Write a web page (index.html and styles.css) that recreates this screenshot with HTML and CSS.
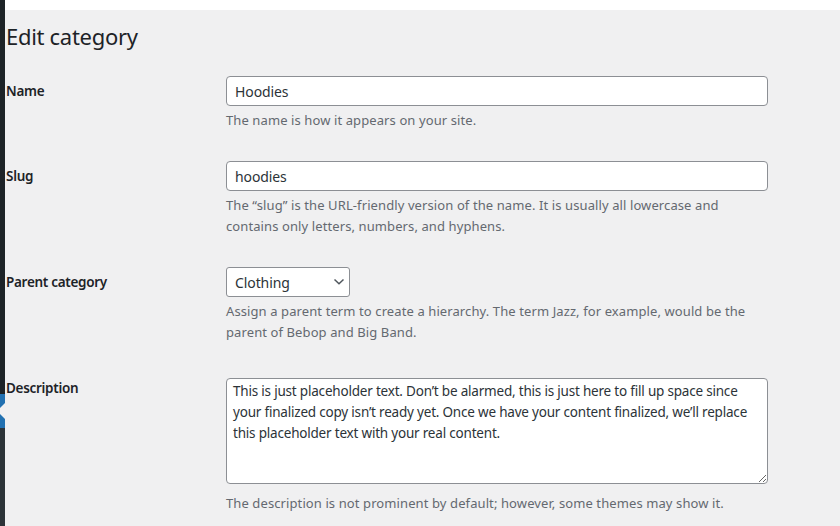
FILE: index.html
```html
<!DOCTYPE html>
<html lang="en">
<head>
<meta charset="utf-8">
<title>Edit category</title>
<link rel="stylesheet" href="styles.css">
</head>
<body>
<div class="layout">
  <aside class="sidebar">
    <div class="menu-top"></div>
    <div class="menu-current"><span class="menu-arrow"></span></div>
    <div class="menu-sub"></div>
  </aside>
  <main class="main">
    <div class="topbar"></div>
    <div class="wrap">
      <h1 class="page-title">Edit category</h1>
      <form class="form-table">
        <div class="form-row">
          <label class="form-label" for="name">Name</label>
          <div class="form-field">
            <input class="text-input" id="name" type="text" value="Hoodies">
            <p class="description">The name is how it appears on your site.</p>
          </div>
        </div>
        <div class="form-row">
          <label class="form-label" for="slug">Slug</label>
          <div class="form-field">
            <input class="text-input" id="slug" type="text" value="hoodies">
            <p class="description">The “slug” is the URL-friendly version of the name. It is usually all lowercase and contains only letters, numbers, and hyphens.</p>
          </div>
        </div>
        <div class="form-row">
          <label class="form-label" for="parent">Parent category</label>
          <div class="form-field">
            <span class="select-wrap">
              <select class="select-input" id="parent">
                <option>Clothing</option>
              </select>
              <svg class="select-chevron" width="12" height="8" viewBox="0 0 12 8" aria-hidden="true"><path d="M1.5 1.5 L6 5.8 L10.5 1.5" fill="none" stroke="#50575e" stroke-width="1.5"/></svg>
            </span>
            <p class="description">Assign a parent term to create a hierarchy. The term Jazz, for example, would be the parent of Bebop and Big Band.</p>
          </div>
        </div>
        <div class="form-row">
          <label class="form-label" for="desc">Description</label>
          <div class="form-field">
            <textarea class="textarea-input" id="desc" rows="5">This is just placeholder text. Don’t be alarmed, this is just here to fill up space since
your finalized copy isn’t ready yet. Once we have your content finalized, we’ll replace
this placeholder text with your real content.</textarea>
            <p class="description desc-after-textarea">The description is not prominent by default; however, some themes may show it.</p>
          </div>
        </div>
      </form>
    </div>
  </main>
</div>
</body>
</html>
```
FILE: styles.css
```css
* { box-sizing: border-box; }

html, body {
  margin: 0;
  padding: 0;
  height: 100%;
  overflow: hidden;
}

body {
  background: #f0f0f1;
  color: #3c434a;
  font-family: "Noto Sans", "Open Sans", sans-serif;
  font-size: 13px;
}

.layout {
  display: flex;
  min-height: 526px;
}

.sidebar {
  width: 5px;
  flex: 0 0 5px;
  display: flex;
  flex-direction: column;
  background: #1d2327;
}

.menu-top {
  height: 394px;
  background: #1d2327;
}

.menu-current {
  height: 34px;
  background: #2271b1;
  position: relative;
  overflow: hidden;
}

.menu-arrow {
  position: absolute;
  right: 0;
  top: 50%;
  margin-top: -8px;
  width: 0;
  height: 0;
  border: 8px solid transparent;
  border-right-color: #f0f0f1;
}

.menu-sub {
  flex: 1;
  background: #2c3338;
}

.main {
  flex: 1;
  display: flex;
  flex-direction: column;
}

.topbar {
  height: 10px;
  background: #ffffff;
}

.wrap {
  padding-left: 1px;
}

.page-title {
  margin: 12px 0 0;
  font-size: 22px;
  font-weight: 400;
  letter-spacing: -0.3px;
  line-height: 29px;
  color: #1d2327;
}

.form-table {
  margin-top: 10px;
  display: flex;
  flex-direction: column;
}

.form-row {
  display: grid;
  grid-template-columns: 210px 562px;
}

.form-label {
  padding: 21px 10px 19px 0;
  font-size: 13.5px;
  font-weight: 600;
  letter-spacing: -0.3px;
  line-height: 18px;
  color: #1d2327;
}

.form-field {
  padding: 15px 10px;
  line-height: 1.3;
}

.text-input {
  display: block;
  width: 542px;
  height: 30px;
  margin: 0;
  padding: 0 8px;
  border: 1px solid #8c8f94;
  border-radius: 4px;
  background: #fff;
  color: #2c3338;
  font-family: inherit;
  font-size: 14px;
  letter-spacing: -0.1px;
  outline: none;
}

.description {
  margin: 4px 0 0;
  font-size: 13px;
  line-height: 21px;
  letter-spacing: 0.1px;
  color: #646970;
}

.select-wrap {
  position: relative;
  display: block;
  width: 124px;
}

.select-input {
  display: block;
  width: 124px;
  height: 30px;
  margin: 0;
  padding: 0 24px 0 8px;
  border: 1px solid #8c8f94;
  border-radius: 3px;
  background: #fff;
  color: #2c3338;
  font-family: inherit;
  font-size: 14px;
  letter-spacing: -0.1px;
  -webkit-appearance: none;
  appearance: none;
  outline: none;
}

.select-chevron {
  position: absolute;
  right: 5px;
  top: 11px;
  pointer-events: none;
}

.textarea-input {
  display: block;
  width: 542px;
  height: 106px;
  margin: 5px 0 0;
  padding: 2px 6px;
  border: 1px solid #8c8f94;
  border-radius: 4px;
  background: #fff;
  color: #2c3338;
  font-family: inherit;
  font-size: 13.5px;
  line-height: 21px;
  letter-spacing: -0.2px;
  resize: both;
  overflow: hidden;
  white-space: pre;
  outline: none;
}

.desc-after-textarea {
  margin-top: 9px;
}
```
